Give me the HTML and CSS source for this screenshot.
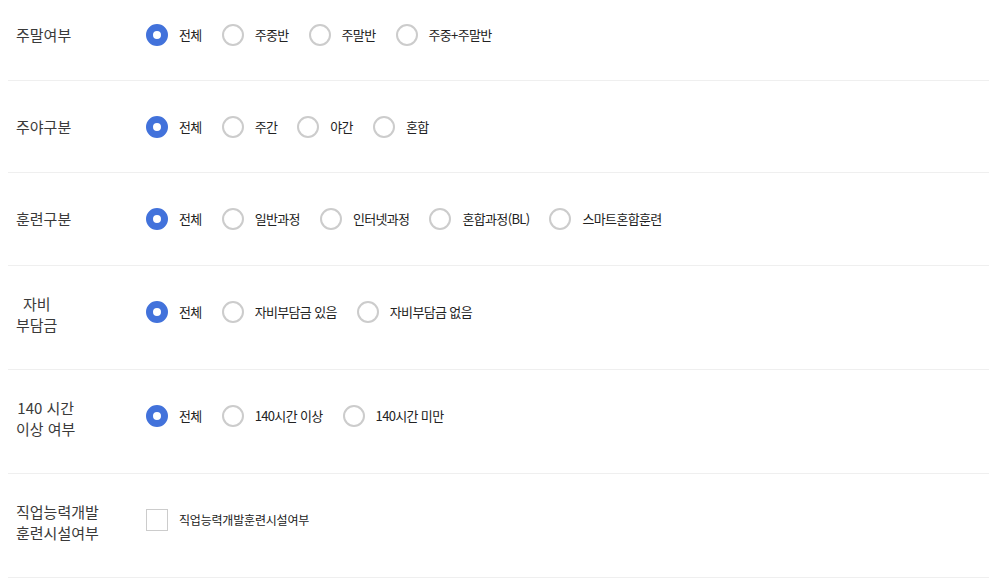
FILE: index.html
```html
<!DOCTYPE html>
<html lang="ko">
<head>
<meta charset="utf-8">
<link rel="stylesheet" href="styles.css">
</head>
<body>
<div class="filters">
  <div class="row">
    <div class="label">주말여부</div>
    <div class="options">
      <span class="opt"><span class="radio on"></span><span class="txt">전체</span></span>
      <span class="opt"><span class="radio"></span><span class="txt">주중반</span></span>
      <span class="opt"><span class="radio"></span><span class="txt">주말반</span></span>
      <span class="opt"><span class="radio"></span><span class="txt">주중+주말반</span></span>
    </div>
  </div>
  <div class="row">
    <div class="label">주야구분</div>
    <div class="options">
      <span class="opt"><span class="radio on"></span><span class="txt">전체</span></span>
      <span class="opt"><span class="radio"></span><span class="txt">주간</span></span>
      <span class="opt"><span class="radio"></span><span class="txt">야간</span></span>
      <span class="opt"><span class="radio"></span><span class="txt">혼합</span></span>
    </div>
  </div>
  <div class="row">
    <div class="label">훈련구분</div>
    <div class="options">
      <span class="opt"><span class="radio on"></span><span class="txt">전체</span></span>
      <span class="opt"><span class="radio"></span><span class="txt">일반과정</span></span>
      <span class="opt"><span class="radio"></span><span class="txt">인터넷과정</span></span>
      <span class="opt"><span class="radio"></span><span class="txt">혼합과정(BL)</span></span>
      <span class="opt"><span class="radio"></span><span class="txt">스마트혼합훈련</span></span>
    </div>
  </div>
  <div class="row">
    <div class="label"><span class="label-text">자비<br>부담금</span></div>
    <div class="options">
      <span class="opt"><span class="radio on"></span><span class="txt">전체</span></span>
      <span class="opt"><span class="radio"></span><span class="txt">자비부담금 있음</span></span>
      <span class="opt"><span class="radio"></span><span class="txt">자비부담금 없음</span></span>
    </div>
  </div>
  <div class="row">
    <div class="label"><span class="label-text">140 시간<br>이상 여부</span></div>
    <div class="options">
      <span class="opt"><span class="radio on"></span><span class="txt">전체</span></span>
      <span class="opt"><span class="radio"></span><span class="txt">140시간 이상</span></span>
      <span class="opt"><span class="radio"></span><span class="txt">140시간 미만</span></span>
    </div>
  </div>
  <div class="row">
    <div class="label"><span class="label-text left">직업능력개발<br>훈련시설여부</span></div>
    <div class="options">
      <span class="opt"><span class="check"></span><span class="txt small">직업능력개발훈련시설여부</span></span>
    </div>
  </div>
</div>
</body>
</html>
```

FILE: styles.css
```css
html, body {
  margin: 0;
  padding: 0;
  background: #ffffff;
}

body {
  font-family: "Noto Sans CJK KR", "Noto Sans", sans-serif;
  color: #333333;
}

.filters {
  margin: -11px 0 0 8px;
}

.row {
  display: flex;
  align-items: flex-start;
  padding: 30px 0 30px 0;
  border-bottom: 1px solid #efefef;
}

.row:nth-child(3) {
  padding-bottom: 31px;
}

.label {
  width: 130px;
  padding-left: 8px;
  min-height: 31px;
  display: flex;
  align-items: center;
  font-size: 15px;
  line-height: 21px;
  color: #3a3a3a;
}

.label-text {
  display: inline-block;
  text-align: center;
  line-height: 20.5px;
  margin-top: -2px;
  padding-bottom: 4px;
}

.label-text.left {
  text-align: left;
}

.options {
  height: 31px;
  display: flex;
  align-items: center;
  gap: 20px;
}

.opt {
  display: flex;
  align-items: center;
  gap: 11px;
}

.txt {
  font-size: 13px;
  letter-spacing: -0.65px;
  color: #222222;
}

.txt.small {
  font-size: 12px;
  letter-spacing: -0.2px;
}

.radio {
  width: 22px;
  height: 22px;
  box-sizing: border-box;
  border-radius: 50%;
  border: 2px solid #cccccc;
  background: #ffffff;
  flex: none;
}

.radio.on {
  border: 7px solid #4272db;
}

.check {
  width: 22px;
  height: 22px;
  box-sizing: border-box;
  border: 1px solid #cccccc;
  background: #ffffff;
  flex: none;
}
```
